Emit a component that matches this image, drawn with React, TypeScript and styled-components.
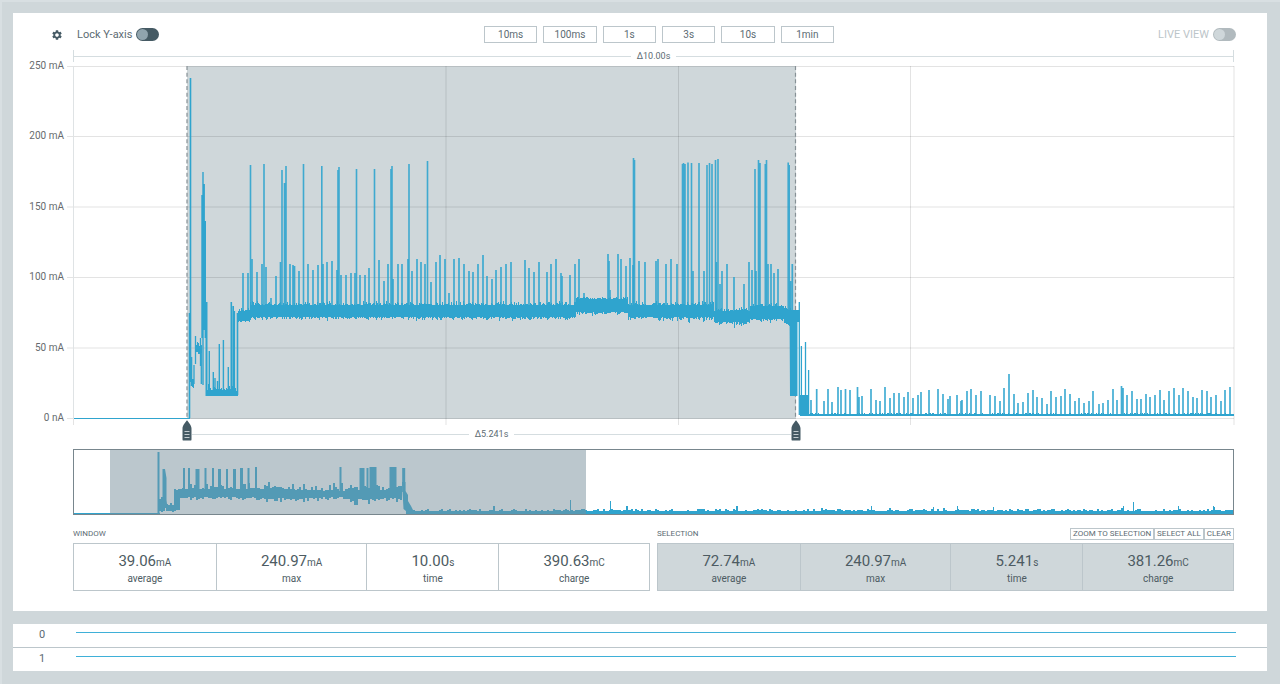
import React from 'react';
import styled, { createGlobalStyle, css } from 'styled-components';
import { MdSettings } from 'react-icons/md';

const color = {
  page: '#cfd7da',
  pageEdge: '#d8dfe2',
  panel: '#ffffff',
  border: '#bcc6cb',
  rule: '#d5dde0',
  text: '#5c6b73',
  value: '#4d5b62',
  dark: '#455a64',
  knob: '#90a4ae',
  trace: '#2fa4ce',
};

const GlobalStyle = createGlobalStyle`
  * { box-sizing: border-box; }
  body {
    margin: 0;
    background: ${color.page};
    font-family: Roboto, "Liberation Sans", sans-serif;
    color: ${color.text};
  }
  button { font-family: inherit; color: inherit; cursor: pointer; }
`;

const Page = styled.main`
  display: flex;
  flex-direction: column;
  gap: 13px;
  min-height: 100vh;
  padding: 11px 13px 13px 11px;
  border: solid ${color.pageEdge};
  border-width: 2px 0 0 2px;
`;

const Panel = styled.section`
  background: ${color.panel};
`;

const ChartPanel = styled(Panel)`
  padding: 12px 0 20px;
`;

/* toolbar */

const Toolbar = styled.header`
  display: grid;
  grid-template-columns: 433fr 350px 402fr;
  align-items: center;
  height: 19px;
  margin-bottom: 6px;
  padding: 0 31px 0 38px;
`;

const ToolGroup = styled.div<{ $end?: boolean }>`
  display: flex;
  align-items: center;
  justify-content: ${(p) => (p.$end ? 'flex-end' : 'flex-start')};
`;

const IconButton = styled.button`
  display: flex;
  width: 12px;
  height: 12px;
  margin: 0 14px 0 0;
  padding: 0;
  border: 0;
  background: none;
  color: ${color.dark};
`;

const SwitchLabel = styled.label<{ $muted?: boolean }>`
  display: flex;
  align-items: center;
  gap: 4px;
  font-size: 11px;
  line-height: 19px;
  color: ${(p) => (p.$muted ? '#bcc5c9' : color.text)};
`;

const Switch = styled.input`
  appearance: none;
  display: flex;
  align-items: center;
  width: 23px;
  height: 13px;
  margin: 0;
  padding: 0 1px;
  border-radius: 7px;
  background: ${color.dark};
  &::before {
    content: '';
    width: 11px;
    height: 11px;
    border-radius: 50%;
    background: ${color.knob};
  }
  &:checked { justify-content: flex-end; }
  &:disabled { background: #b1babe; }
  &:disabled::before { background: #cfd7da; }
`;

const RangeButtons = styled.div`
  display: grid;
  grid-template-columns: repeat(6, 1fr);
  gap: 6px;
`;

const outlined = css`
  border: 1px solid ${color.border};
  background: ${color.panel};
`;

const RangeButton = styled.button`
  ${outlined}
  height: 17px;
  padding: 0;
  font-size: 10px;
  line-height: 15px;
`;

/* chart */

const ChartGrid = styled.div`
  display: grid;
  grid-template-columns: 60px minmax(0, 1fr);
  padding-right: 33px;
`;

const ChartColumn = styled.div`
  grid-column: 2;
`;

const Span = styled.div<{ $capped?: boolean }>`
  display: flex;
  flex: 1;
  align-items: center;
  gap: 6px;
  height: 14px;
  font-size: 9px;
  line-height: 12px;
  ${(p) =>
    p.$capped &&
    css`
      height: 12px;
      margin-bottom: 4px;
      border: solid ${color.rule};
      border-width: 0 1px;
    `}
  &::before,
  &::after {
    content: '';
    flex: 1;
    height: 1px;
    background: ${color.rule};
  }
`;

const YAxis = styled.ol`
  display: flex;
  flex-direction: column;
  justify-content: space-between;
  margin: -7px 9px -6px 0;
  padding: 0;
  list-style: none;
  text-align: right;
  font-size: 10px;
  line-height: 14px;
  color: #666b6e;
`;

const Plot = styled.svg`
  display: block;
  width: 100%;
  height: 353px;
  overflow: visible;
`;

const SelectionRow = styled.div`
  display: grid;
  grid-template-columns: 114fr 609fr 438fr;
  margin-top: 1px;
`;

const SelectionSpan = styled.div`
  grid-column: 2;
  display: flex;
  align-items: flex-end;
  height: 21px;
  margin: 0 -5px;
`;

const HandleButton = styled.button`
  display: flex;
  padding: 0;
  border: 0;
  background: none;
  cursor: ew-resize;
`;

const Minimap = styled.div`
  height: 66px;
  margin-top: 8px;
  border: 1px solid #78868d;
`;

const MinimapSvg = styled.svg`
  display: block;
  width: 100%;
  height: 64px;
`;

/* statistics */

const StatsRow = styled.div`
  display: grid;
  grid-template-columns: 1fr 1fr;
  gap: 7px;
  margin-top: 13px;
`;

const StatsHead = styled.div`
  display: flex;
  justify-content: space-between;
  align-items: center;
  height: 12px;
  margin-bottom: 3px;
`;

const StatsTitle = styled.h2`
  margin: 0;
  font-size: 8px;
  font-weight: 400;
  line-height: 12px;
  text-transform: uppercase;
`;

const SmallButton = styled.button`
  ${outlined}
  height: 12px;
  padding: 0 2px;
  font-size: 8px;
  line-height: 10px;
  text-transform: uppercase;
`;

const StatsBox = styled.div<{ $filled?: boolean }>`
  display: grid;
  grid-template-columns: 142fr 151fr 132fr 151fr;
  height: 48px;
  border: 1px solid ${color.border};
  background: ${(p) => (p.$filled ? color.page : color.panel)};
`;

const Stat = styled.div`
  display: flex;
  flex-direction: column;
  align-items: center;
  padding-top: 8px;
  color: ${color.value};
  & + & { border-left: 1px solid ${color.border}; }
`;

const StatValue = styled.div`
  font-size: 15px;
  line-height: 19px;
`;

const StatUnit = styled.span`
  font-size: 10px;
`;

const StatLabel = styled.div`
  font-size: 10px;
  line-height: 14px;
`;

/* digital channels */

const Channel = styled.div`
  display: grid;
  grid-template-columns: 58px 1fr;
  height: 23px;
  padding-right: 31px;
  font-size: 11px;
  line-height: 22px;
  text-align: center;
  & + & {
    height: 24px;
    border-top: 1px solid ${color.border};
  }
`;

const ChannelTrace = styled.div`
  height: 1px;
  margin: 8px 0 0 5px;
  background: #3fb0d8;
`;

/* trace data: [x, y] of each peak, in the plot's own coordinates */

type Peak = [number, number];

const tallPeaks: Peak[] = [
  [250.5, 165], [264, 164], [282, 170], [284.5, 183], [286, 166], [303.5, 164], [321.8, 166],
  [338, 170], [339, 167], [356.5, 169], [374.5, 169], [391, 169], [392, 166], [409, 164],
  [427.5, 161], [633.5, 158], [634.5, 160], [682.5, 164], [683.5, 163], [685, 164], [688, 162.5],
  [691.5, 163], [699, 163], [707, 165], [709.5, 163], [712, 164], [715.5, 160], [718, 159],
  [755, 169], [758.5, 160], [760, 163], [765.3, 164], [766.5, 160], [788.2, 162.5], [789.2, 165],
];

const midPeaks: Peak[] = [
  [243, 273], [248, 273], [252, 259], [257, 272], [262, 264], [266, 267], [271, 298], [276, 276],
  [280.5, 262], [290, 264], [293, 265], [294.5, 266], [299, 271], [308, 264], [313, 270],
  [318, 265], [323, 264], [327, 262], [332, 261], [337, 270], [341, 275], [346, 275], [351, 273],
  [355, 273], [360, 275], [365, 275], [369, 268], [379, 260], [384, 281], [388, 264], [393, 279],
  [398, 264], [402, 264], [408, 259], [412, 271], [417, 259], [421, 262], [425, 264], [431, 282],
  [436, 262], [440, 255], [445, 259], [449, 293], [454, 259], [459, 258], [464, 264], [469, 271],
  [473, 272], [478, 264], [483, 255], [487, 276], [492, 279], [496, 270], [501, 267], [506, 264],
  [511, 262], [525, 260], [529, 268], [534, 272], [539, 262], [547, 272], [551, 264], [556, 259],
  [561, 273], [562, 276], [570, 275], [575, 264], [579, 259], [584, 293], [608, 254], [609, 261],
  [610, 290], [618, 254], [621, 259], [626, 266], [630, 258], [633, 265], [639, 261], [645, 262],
  [656, 261], [658, 259], [666, 264], [671, 259], [677, 264], [693, 271], [704, 271], [716.5, 262],
  [720, 284], [722, 271], [727, 264], [734, 277], [744, 284], [749, 262], [752, 270], [756, 271],
  [768, 264], [771, 264], [774, 273], [778, 269], [790.5, 281], [792.3, 264],
];

const lowPeaks: Peak[] = [
  [811, 400], [816.7, 389], [824, 401], [828, 389], [832, 402], [838, 387], [841, 390], [845.5, 389],
  [850, 390], [857.5, 387], [859, 397], [862, 396], [871, 389], [876, 400], [880, 401], [885, 387],
  [890, 398], [894, 393], [899, 393], [904, 397], [908, 392], [913, 398], [918, 395], [921, 392],
  [929, 390], [938, 389], [943, 394], [948, 399], [950, 396], [957, 395], [961, 401], [962, 400],
  [967, 391], [971, 389], [976, 395], [981, 391], [990, 395], [995, 396], [1000, 401], [1004, 388],
  [1009, 374], [1014, 394], [1018, 403], [1023, 402], [1028, 393], [1033, 390], [1037, 397],
  [1042, 398], [1047, 404], [1051, 391], [1056, 397], [1061, 396], [1065, 389], [1070, 394],
  [1075, 401], [1079, 398], [1084, 403], [1089, 401], [1093, 391], [1099, 404], [1103, 403],
  [1108, 400], [1113, 389], [1117, 400], [1121.5, 386], [1123, 388], [1127, 395], [1132, 391],
  [1137, 399], [1141, 399], [1146, 394], [1150, 397], [1155, 395], [1160, 390], [1164, 400],
  [1169, 391], [1174, 388], [1179, 395], [1183, 388], [1188, 391], [1193, 397], [1197, 398],
  [1202, 390], [1207, 391], [1211, 397], [1216, 395], [1221, 401], [1225, 390], [1230, 387],
];

/* [from, to, top, bottom, noise above, noise below] */
type Band = [number, number, number, number, number, number];

const plotBands: Band[] = [
  [238, 250, 311, 321, 3, 1],
  [250, 576, 305, 317, 3, 3],
  [576, 628, 299, 312, 2, 3],
  [628, 714, 305, 317, 3, 4],
  [714, 750, 311, 322, 3, 4],
  [750, 784, 306, 319, 3, 3],
  [784, 791, 310, 323, 3, 3],
  [191, 194, 379, 386, 3, 2],
  [195, 202, 346, 352, 4, 3],
  [207, 238, 391, 396, 7, 0],
  [809, 1234, 414, 416, 1, 0],
];

const miniBands: Band[] = [
  [159, 164, 499, 511, 8, 2],
  [166, 175, 505, 511, 4, 1],
  [174, 180, 491, 510, 5, 2],
  [180, 258, 489, 497, 5, 3],
  [258, 293, 489, 498, 5, 3],
  [293, 323, 490, 498, 5, 5],
  [323, 346, 491, 497, 7, 3],
  [346, 380, 490, 499, 6, 5],
  [380, 402, 490, 498, 5, 4],
  [411, 1233, 511, 514, 2, 0],
];

const miniPeaks: [number, number, number][] = [
  [184, 468, 2], [189, 468, 2], [197.5, 469, 4], [205.5, 468, 2], [213, 468, 2], [219.5, 469, 3],
  [227, 469, 2], [234.5, 469, 3], [241.5, 468, 3], [248.5, 468, 2], [256, 467, 2], [340.5, 467, 2],
  [362, 468, 5], [367.5, 468, 2], [373, 467, 7], [393, 467, 7], [403.7, 468, 3],
];

const miniTips: Peak[] = [
  [493, 506], [494, 506], [570, 500], [610, 501], [626, 506], [627, 506], [736, 506], [737, 506],
  [871, 506], [933, 507], [957, 506], [993, 507], [1123, 506], [1133, 502], [1178, 506],
  [1213, 506], [1214, 507],
];

const randomFrom = (seed: number) => () => {
  seed = (seed * 16807) % 2147483647;
  return seed / 2147483647;
};

const bandPath = (bands: Band[], step: number, seed: number) => {
  const random = randomFrom(seed);
  let d = '';
  bands.forEach(([from, to, top, bottom, above, below]) => {
    for (let x = from; x < to; x += step) {
      const y1 = top - Math.round(random() * random() * above * 1.5);
      const y2 = bottom + Math.round(random() * random() * below * 1.5);
      d += `M${x} ${y1}H${x + step}V${y2}H${x}Z`;
    }
  });
  return d;
};

const peakPath = (peaks: Peak[], base: number) =>
  peaks.map(([x, y]) => `M${x} ${y}V${base}`).join('');

const gridX = [73.5, 446, 678.5, 910.5, 1234];
const gridY = [66.5, 136.5, 207, 277.5, 348, 418.5];

const CurrentPlot = () => (
  <Plot viewBox="73 66 1161 353" preserveAspectRatio="none" role="img" aria-label="Current over time">
    <rect x="187" y="66" width="609" height="353" fill={color.page} />
    <path
      d={gridY.map((y) => `M67 ${y}H1234`).join('') + gridX.map((x) => `M${x} 66V425`).join('')}
      fill="none"
      stroke="#000"
      strokeOpacity="0.11"
    />
    <path d="M187 66V419M795.5 66V419" stroke="#879196" strokeWidth="1.2" strokeDasharray="4 2.67" />
    <g fill="none" stroke={color.trace}>
      <path d="M73 418.5H190" strokeWidth="1.2" />
      <path d="M189.5 313V418" strokeWidth="1.6" />
      <path d="M190.5 78V382M191.5 357V386" strokeWidth="1.6" />
      <path d="M194 365V384M195.5 336V364M200.5 338V366M201.3 345V384" strokeWidth="1.3" />
      <path d="M202 195V338M203 172V385M204.2 184V330M205.3 221V338" strokeWidth="1.4" />
      <path d="M206.5 302V396" strokeWidth="2" />
      <path
        d="M209.3 351V394M213.3 372V394M215 378V394M217.5 381V394M219.3 344V394M223.4 340V394M228.3 367V394"
        strokeWidth="1.4"
      />
      <path d="M231.3 302V394M233.2 306V394M234.3 311V394M237.5 313V395" strokeWidth="1.6" />
      <path d={peakPath(midPeaks, 312)} strokeWidth="1.7" strokeOpacity="0.9" />
      <path d={peakPath(tallPeaks, 314)} strokeWidth="1.6" strokeOpacity="0.9" />
      <path d={peakPath(lowPeaks, 415)} strokeWidth="1.7" strokeOpacity="0.9" />
      <path d="M799.3 302V415M801.4 346V415M805.5 342V415M808.6 370V415" strokeWidth="1.3" />
    </g>
    <path
      d={`${bandPath(plotBands, 1, 4711)}M789.5 310H800V322H797.5V396H790Z M800 395H809V416H800Z`}
      fill={color.trace}
    />
    <path d="M73.5 66V419" stroke="#dfe3e5" />
  </Plot>
);

const Handle = ({ label }: { label: string }) => (
  <HandleButton aria-label={label}>
    <svg width="10" height="21" viewBox="0 0 10 21">
      <path d="M5 0.3C6.6 2.3 9.5 5.4 9.5 8.6V19.4Q9.5 20.6 8.3 20.6H1.7Q0.5 20.6 0.5 19.4V8.6C0.5 5.4 3.4 2.3 5 0.3Z" fill={color.dark} />
      <path d="M2.5 11.5H7.5M2.5 14.5H7.5M2.5 17.5H7.5" stroke="#c3ccd0" />
    </svg>
  </HandleButton>
);

const Overview = () => (
  <Minimap>
    <MinimapSvg viewBox="74 450 1159 64" preserveAspectRatio="none" role="img" aria-label="Recording overview">
      <g fill={color.trace}>
        <rect x="74" y="513" width="86" height="1" />
        <rect x="157.5" y="452" width="2" height="62" />
        <path d="M162.5 469H165L166.5 478V500L167.5 508H162.5Z" />
        <path d="M402 482H405.5V491L408 495V501L411 506L413 510V514H406V511L403.5 509Z" />
        <path d={bandPath(miniBands, 2, 97)} />
        <path d={miniPeaks.map(([x, y, w]) => `M${x - w / 2} ${y}h${w}V492h${-w}Z`).join('')} />
        <path d={miniTips.map(([x, y]) => `M${x} ${y}h1V512h-1Z`).join('')} />
      </g>
      <rect x="110" y="450" width="476" height="64" fill="#78909c" fillOpacity="0.5" />
    </MinimapSvg>
  </Minimap>
);

type StatItem = { value: string; unit: string; label: string };

type StatsProps = { title: string; items: StatItem[]; filled?: boolean; children?: React.ReactNode };

const Stats = ({ title, items, filled, children }: StatsProps) => (
  <section>
    <StatsHead>
      <StatsTitle>{title}</StatsTitle>
      <ToolGroup>{children}</ToolGroup>
    </StatsHead>
    <StatsBox $filled={filled}>
      {items.map((item) => (
        <Stat key={item.label}>
          <StatValue>
            {item.value}
            <StatUnit>{item.unit}</StatUnit>
          </StatValue>
          <StatLabel>{item.label}</StatLabel>
        </Stat>
      ))}
    </StatsBox>
  </section>
);

const ranges = ['10ms', '100ms', '1s', '3s', '10s', '1min'];
const yLabels = ['250 mA', '200 mA', '150 mA', '100 mA', '50 mA', '0 nA'];

const windowStats: StatItem[] = [
  { value: '39.06', unit: 'mA', label: 'average' },
  { value: '240.97', unit: 'mA', label: 'max' },
  { value: '10.00', unit: 's', label: 'time' },
  { value: '390.63', unit: 'mC', label: 'charge' },
];

const selectionStats: StatItem[] = [
  { value: '72.74', unit: 'mA', label: 'average' },
  { value: '240.97', unit: 'mA', label: 'max' },
  { value: '5.241', unit: 's', label: 'time' },
  { value: '381.26', unit: 'mC', label: 'charge' },
];

export default function App() {
  return (
    <>
      <GlobalStyle />
      <Page>
        <ChartPanel>
          <Toolbar>
            <ToolGroup>
              <IconButton aria-label="Chart settings">
                <MdSettings size={12} />
              </IconButton>
              <SwitchLabel>
                Lock Y-axis
                <Switch type="checkbox" role="switch" />
              </SwitchLabel>
            </ToolGroup>
            <RangeButtons>
              {ranges.map((range) => (
                <RangeButton key={range}>{range}</RangeButton>
              ))}
            </RangeButtons>
            <ToolGroup $end>
              <SwitchLabel $muted>
                LIVE VIEW
                <Switch type="checkbox" role="switch" disabled />
              </SwitchLabel>
            </ToolGroup>
          </Toolbar>
          <ChartGrid>
            <ChartColumn>
              <Span $capped>Δ10.00s</Span>
            </ChartColumn>
            <YAxis>
              {yLabels.map((label) => (
                <li key={label}>{label}</li>
              ))}
            </YAxis>
            <CurrentPlot />
            <ChartColumn>
              <SelectionRow>
                <SelectionSpan>
                  <Handle label="Selection start" />
                  <Span>Δ5.241s</Span>
                  <Handle label="Selection end" />
                </SelectionSpan>
              </SelectionRow>
              <Overview />
              <StatsRow>
                <Stats title="Window" items={windowStats} />
                <Stats title="Selection" items={selectionStats} filled>
                  <SmallButton>Zoom to selection</SmallButton>
                  <SmallButton>Select all</SmallButton>
                  <SmallButton>Clear</SmallButton>
                </Stats>
              </StatsRow>
            </ChartColumn>
          </ChartGrid>
        </ChartPanel>
        <Panel>
          {['0', '1'].map((channel) => (
            <Channel key={channel}>
              {channel}
              <ChannelTrace />
            </Channel>
          ))}
        </Panel>
      </Page>
    </>
  );
}
